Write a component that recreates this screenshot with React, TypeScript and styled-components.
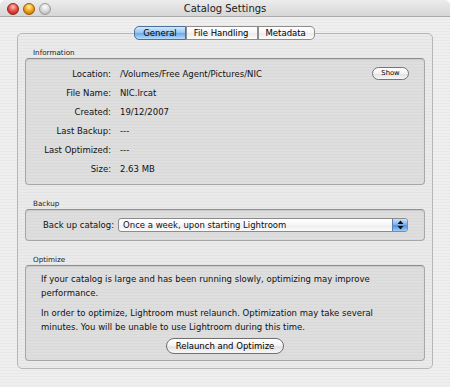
import React from 'react'
import styled, { createGlobalStyle } from 'styled-components'

const GlobalStyle = createGlobalStyle`
  html, body {
    margin: 0;
    padding: 0;
    background: #fff;
  }
  body {
    font-family: 'DejaVu Sans', Verdana, sans-serif;
    color: #111;
  }
`

const stripes = (a: string, b: string) =>
  `repeating-linear-gradient(to bottom, ${a} 0px, ${a} 2px, ${b} 2px, ${b} 3px)`

const infoRows: [string, string][] = [
  ['Location:', '/Volumes/Free Agent/Pictures/NIC'],
  ['File Name:', 'NIC.lrcat'],
  ['Created:', '19/12/2007'],
  ['Last Backup:', '---'],
  ['Last Optimized:', '---'],
  ['Size:', '2.63 MB'],
]

const tabs = ['General', 'File Handling', 'Metadata']

const App = () => (
  <>
    <GlobalStyle />
    <Window>
      <TitleBar>
        <Lights>
          <Light $tone="red" />
          <Light $tone="yellow" />
          <Light $tone="gray" />
        </Lights>
        <Title>Catalog Settings</Title>
        <span />
      </TitleBar>

      <Body>
        <TabBar>
          {tabs.map((t, i) => (
            <Tab key={t} $active={i === 0} $first={i === 0} $last={i === tabs.length - 1}>
              {t}
            </Tab>
          ))}
        </TabBar>

        <Panel>
          <Section>
            <SectionLabel>Information</SectionLabel>
            <GroupBox>
              <InfoGrid>
                {infoRows.map(([label, value], i) => (
                  <React.Fragment key={label}>
                    <InfoLabel>{label}</InfoLabel>
                    <InfoValue>{value}</InfoValue>
                    {i === 0 && <SmallButton>Show</SmallButton>}
                  </React.Fragment>
                ))}
              </InfoGrid>
            </GroupBox>
          </Section>

          <Section>
            <SectionLabel>Backup</SectionLabel>
            <GroupBox>
              <BackupRow>
                <FieldLabel>Back up catalog:</FieldLabel>
                <Select>
                  <SelectText>Once a week, upon starting Lightroom</SelectText>
                  <Stepper>
                    <svg width="7" height="10" viewBox="0 0 7 10">
                      <path d="M3.5 0.5 L6.5 4 L0.5 4 Z" fill="#111" />
                      <path d="M3.5 9.5 L6.5 6 L0.5 6 Z" fill="#111" />
                    </svg>
                  </Stepper>
                </Select>
              </BackupRow>
            </GroupBox>
          </Section>

          <Section>
            <SectionLabel>Optimize</SectionLabel>
            <GroupBox>
              <OptimizeBody>
                <Para>
                  If your catalog is large and has been running slowly, optimizing may improve
                  <br />
                  performance.
                </Para>
                <Para>
                  In order to optimize, Lightroom must relaunch. Optimization may take several
                  <br />
                  minutes. You will be unable to use Lightroom during this time.
                </Para>
                <ButtonRow>
                  <PushButton>Relaunch and Optimize</PushButton>
                </ButtonRow>
              </OptimizeBody>
            </GroupBox>
          </Section>
        </Panel>
      </Body>
    </Window>
  </>
)

const Window = styled.div`
  width: 450px;
  height: 387px;
  display: flex;
  flex-direction: column;
  border-radius: 5px 5px 0 0;
  overflow: hidden;
`

const TitleBar = styled.div`
  height: 16px;
  display: grid;
  grid-template-columns: 1fr auto 1fr;
  align-items: center;
  background: linear-gradient(to bottom, #ececec, #d6d6d6);
  border-bottom: 1px solid #a9a9a9;
`

const Lights = styled.div`
  display: flex;
  gap: 4px;
  padding-left: 7px;
`

const lightTones = {
  red: 'radial-gradient(circle at 50% 30%, #ffc4bd 0%, #ee5249 45%, #a41c15 100%)',
  yellow: 'radial-gradient(circle at 50% 30%, #fff0b0 0%, #f5aa1c 45%, #a9620a 100%)',
  gray: 'radial-gradient(circle at 50% 30%, #ffffff 0%, #d8d8d8 50%, #a9a9a9 100%)',
}

const Light = styled.span<{ $tone: keyof typeof lightTones }>`
  width: 12px;
  height: 12px;
  box-sizing: border-box;
  border-radius: 50%;
  background: ${p => lightTones[p.$tone]};
  border: 1px solid ${p => (p.$tone === 'gray' ? '#9a9a9a' : p.$tone === 'red' ? '#8a2620' : '#95590c')};
`

const Title = styled.div`
  font-size: 10px;
  line-height: 16px;
  color: #1a1a1a;
  padding-top: 1px;
`

const Body = styled.div`
  flex: 1;
  padding: 9px 17px 0;
  background: ${stripes('#efefef', '#e8e8e8')};
`

const TabBar = styled.div`
  display: flex;
  justify-content: center;
  position: relative;
  z-index: 1;
  margin-bottom: -7px;
  padding-right: 1px;
`

const Tab = styled.div<{ $active: boolean; $first: boolean; $last: boolean }>`
  height: 14px;
  box-sizing: border-box;
  padding: 0 8px;
  font-size: 8.5px;
  line-height: 12px;
  color: #000;
  border: 1px solid ${p => (p.$active ? '#4d6f9e' : '#8d8d8d')};
  border-left: ${p => (p.$first ? undefined : 'none')};
  border-radius: ${p => (p.$first ? '5px 0 0 5px' : p.$last ? '0 5px 5px 0' : '0')};
  background: ${p =>
    p.$active
      ? 'linear-gradient(to bottom, #d3e8fb 0%, #9ac8f3 45%, #6eaaec 55%, #b7dbfa 100%)'
      : 'linear-gradient(to bottom, #ffffff 0%, #f6f6f6 45%, #ebebeb 55%, #fdfdfd 100%)'};
  & + & {
    box-shadow: inset 1px 0 0 #8d8d8d;
  }
`

const Panel = styled.div`
  display: flex;
  flex-direction: column;
  gap: 14px;
  padding: 14px 7px 7px;
  border: 1px solid #b6b6b6;
  border-radius: 5px;
  background: ${stripes('#eaeaea', '#e4e4e4')};
`

const Section = styled.div`
  display: flex;
  flex-direction: column;
`

const SectionLabel = styled.div`
  font-size: 7.2px;
  line-height: 9px;
  padding-left: 8px;
  margin-bottom: 1px;
  color: #222;
`

const GroupBox = styled.div`
  border: 1px solid #a7a7a7;
  border-top-color: #8f8f8f;
  border-radius: 4px;
  background: ${stripes('#dedede', '#d9d9d9')};
  box-shadow: inset 0 1px 1px rgba(0, 0, 0, 0.1);
`

const InfoGrid = styled.div`
  display: grid;
  grid-template-columns: 85px 1fr auto;
  grid-auto-rows: 19px;
  column-gap: 9px;
  align-items: center;
  padding: 5px 15px 6px 0;
`

const InfoLabel = styled.div`
  grid-column: 1;
  text-align: right;
  font-size: 8.5px;
  white-space: nowrap;
`

const InfoValue = styled.div`
  grid-column: 2;
  font-size: 8.5px;
  white-space: nowrap;
`

const SmallButton = styled.button`
  grid-column: 3;
  width: 37px;
  height: 13px;
  padding: 0;
  font-family: inherit;
  font-size: 6.8px;
  line-height: 11px;
  color: #000;
  border: 1px solid #747474;
  border-radius: 7px;
  background: linear-gradient(to bottom, #ffffff 0%, #f2f2f2 50%, #e2e2e2 55%, #f8f8f8 100%);
`

const BackupRow = styled.div`
  display: flex;
  align-items: center;
  gap: 4px;
  padding: 8px 16px 8px 17px;
`

const FieldLabel = styled.div`
  font-size: 8.5px;
  white-space: nowrap;
`

const Select = styled.div`
  flex: 1;
  height: 14px;
  box-sizing: border-box;
  display: flex;
  align-items: stretch;
  border: 1px solid #8b8b8b;
  border-radius: 3px;
  overflow: hidden;
  background: linear-gradient(to bottom, #ffffff 0%, #f7f7f7 50%, #eeeeee 55%, #fbfbfb 100%);
`

const SelectText = styled.div`
  flex: 1;
  padding-left: 4px;
  font-size: 8.5px;
  line-height: 12px;
  white-space: nowrap;
`

const Stepper = styled.div`
  width: 14px;
  display: flex;
  align-items: center;
  justify-content: center;
  border-left: 1px solid #5c7fb3;
  background: linear-gradient(to bottom, #c9e1fb 0%, #82b5f0 45%, #4f92e4 55%, #9fcdf8 100%);
`

const OptimizeBody = styled.div`
  display: flex;
  flex-direction: column;
  gap: 6px;
  padding: 6px 15px 6px;
`

const Para = styled.p`
  margin: 0;
  font-size: 8.5px;
  line-height: 14px;
  white-space: nowrap;
`

const ButtonRow = styled.div`
  display: flex;
  justify-content: center;
  margin-top: -2px;
`

const PushButton = styled.button`
  height: 16px;
  padding: 0 9px;
  font-family: inherit;
  font-size: 8.5px;
  line-height: 14px;
  color: #000;
  border: 1px solid #6f6f6f;
  border-radius: 8px;
  background: linear-gradient(to bottom, #ffffff 0%, #f3f3f3 50%, #e1e1e1 55%, #f9f9f9 100%);
`

export default App
